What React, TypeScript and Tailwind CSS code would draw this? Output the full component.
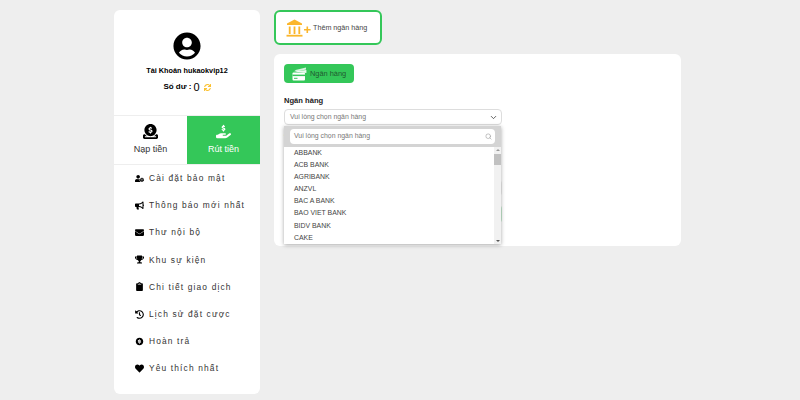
import { ChevronDown, Search } from 'lucide-react'
import { FaBullhorn, FaClipboard, FaEnvelope, FaHeart, FaHistory, FaSync, FaTrophy, FaUserCircle, FaUserCog } from 'react-icons/fa'
import { FaCircleDollarToSlot, FaHandHoldingDollar } from 'react-icons/fa6'
import { RiMoneyDollarCircleFill } from 'react-icons/ri'

const menu = [
  { icon: FaUserCog, label: 'Cài đặt bảo mật' },
  { icon: FaBullhorn, label: 'Thông báo mới nhất' },
  { icon: FaEnvelope, label: 'Thư nội bộ' },
  { icon: FaTrophy, label: 'Khu sự kiện' },
  { icon: FaClipboard, label: 'Chi tiết giao dịch' },
  { icon: FaHistory, label: 'Lịch sử đặt cược' },
  { icon: RiMoneyDollarCircleFill, label: 'Hoàn trả' },
  { icon: FaHeart, label: 'Yêu thích nhất' },
]

const banks = ['ABBANK', 'ACB BANK', 'AGRIBANK', 'ANZVL', 'BAC A BANK', 'BAO VIET BANK', 'BIDV BANK', 'CAKE']

function BankPlusIcon() {
  return (
    <svg width="25" height="18" viewBox="0 0 25 18" className="shrink-0">
      <path d="M8.5 0.5 L16 4.5 V6 H1 V4.5 Z" fill="#fbb62c" />
      <path d="M2.8 7.5 H4.6 V15 H2.8 Z M7.6 7.5 H9.4 V15 H7.6 Z M12.4 7.5 H14.2 V15 H12.4 Z" fill="#fbb62c" />
      <path d="M0.5 15.8 H16.5 V17.6 H0.5 Z" fill="#fbb62c" />
      <path d="M18 10 H24.6 V11.6 H18 Z M20.5 7.5 H22.1 V14.1 H20.5 Z" fill="#fbb62c" />
    </svg>
  )
}

function CardsIcon() {
  return (
    <svg width="15" height="14" viewBox="0 0 15 14" className="shrink-0">
      <path d="M2.5 3.2 L14 0.6 V2.4 L5 4.4 Z" fill="#ffffff" opacity="0.8" />
      <path d="M1.5 4.6 L14.4 3 V6 L9 5.2 Z" fill="#ffffff" opacity="0.9" />
      <rect x="0.5" y="5.6" width="12.5" height="8" rx="1" fill="#ffffff" />
      <rect x="0.5" y="7.6" width="12.5" height="1.5" fill="#34c759" />
      <rect x="2" y="10.8" width="3.5" height="1" fill="#34c759" />
    </svg>
  )
}

function Sidebar() {
  return (
    <aside className="flex h-[384px] w-[146px] shrink-0 flex-col overflow-hidden rounded-md bg-white">
      <div className="flex h-[105px] flex-col items-center pt-[22px]">
        <FaUserCircle className="size-[28px] text-black" />
        <div className="mt-[6px] text-[7.3px] font-bold leading-[10px] text-black">Tài Khoản hukaokvip12</div>
        <div className="mt-[4px] flex h-[14px] items-center gap-[2px] text-[8px] font-bold text-black">
          Số dư : <span className="text-[11px] font-normal">0</span>
          <FaSync className="ml-[2px] size-[7px] text-[#fbc02d]" />
        </div>
      </div>
      <div className="flex h-[50px] border-y border-[#eeeeee]">
        <div className="flex w-[73px] flex-col items-center pt-[8px] text-[#333333]">
          <FaCircleDollarToSlot className="size-[15px] text-black" />
          <span className="mt-[4px] text-[9px]">Nạp tiền</span>
        </div>
        <div className="flex w-[73px] flex-col items-center bg-[#34c759] pt-[8px] text-white">
          <FaHandHoldingDollar className="size-[15px]" />
          <span className="mt-[4px] text-[9px]">Rút tiền</span>
        </div>
      </div>
      <nav className="flex flex-col">
        {menu.map((item) => (
          <div key={item.label} className="flex h-[27.1px] items-center pl-[21px] text-[8.4px] tracking-[1.15px] text-[#333333]">
            <item.icon className="mr-[5px] size-[9px] shrink-0 text-black" />
            {item.label}
          </div>
        ))}
      </nav>
    </aside>
  )
}

function BankDropdown() {
  return (
    <div className="absolute left-0 top-[17px] z-10 w-[217px] bg-white shadow-[0_1px_4px_rgba(0,0,0,0.35)]">
      <div className="bg-[#d4d4d4] px-[6px] py-[3px]">
        <div className="flex h-[15px] items-center justify-between rounded-sm bg-white pl-[4px] pr-[3px] text-[6.9px] text-[#777777]">
          Vui lòng chọn ngân hàng
          <Search className="size-[7px] text-[#999999]" />
        </div>
      </div>
      <div className="flex">
        <ul className="flex-1 pl-[10px] text-[6.9px] leading-[12.1px] text-[#444444]">
          {banks.map((b) => (
            <li key={b}>{b}</li>
          ))}
        </ul>
        <div className="flex h-[97px] w-[7px] flex-col items-center bg-[#f1f1f1] py-[2px]">
          <div className="h-0 w-0 border-x-[2px] border-b-[2px] border-x-transparent border-b-[#999999]" />
          <div className="mt-[3px] mb-auto h-[11px] w-full bg-[#c1c1c1]" />
          <div className="h-0 w-0 border-x-[2px] border-t-[2px] border-x-transparent border-t-[#555555]" />
        </div>
      </div>
    </div>
  )
}

export default function App() {
  return (
    <div className="flex h-[400px] w-[800px] gap-[14px] overflow-hidden bg-[#eeeeee] pl-[114px] pt-[10px] font-['Liberation_Sans',Arial,sans-serif]">
      <Sidebar />
      <main className="flex w-[407px] flex-col">
        <div className="flex h-[35px] w-[108px] items-center gap-[2px] rounded-md border-2 border-[#34c759] bg-white pl-[10px] text-[7.2px] text-[#444444]">
          <BankPlusIcon />
          <span className="translate-y-px">Thêm ngân hàng</span>
        </div>
        <section className="mt-[9px] h-[192px] rounded-md bg-white pl-[10px] pt-[10px]">
          <div className="flex h-[19px] w-[70px] items-center gap-[3px] rounded-[4px] bg-[#34c759] pl-[8px] text-[7.4px] text-[#1f5a2f]">
            <CardsIcon />
            Ngân hàng
          </div>
          <div className="mt-[12px] text-[7.6px] font-bold leading-[11px] text-[#222222]">Ngân hàng</div>
          <div className="relative mt-[3px] w-[218px]">
            <div className="flex h-[16px] items-center justify-between rounded-sm border border-[#dddddd] bg-white pl-[5px] pr-[3px] text-[6.9px] text-[#777777]">
              Vui lòng chọn ngân hàng
              <ChevronDown className="size-[9px] text-[#333333]" />
            </div>
            <BankDropdown />
          </div>
          <div className="mt-[8px] text-[8px] leading-[8px] text-[#fbb62c]">*</div>
          <div className="mt-[39px] h-[16px] w-[218px] rounded-sm bg-[#eeeeee]" />
          <div className="mt-[9px] h-[18px] w-[218px] rounded-sm bg-[#c6ebd0]" />
        </section>
      </main>
    </div>
  )
}
